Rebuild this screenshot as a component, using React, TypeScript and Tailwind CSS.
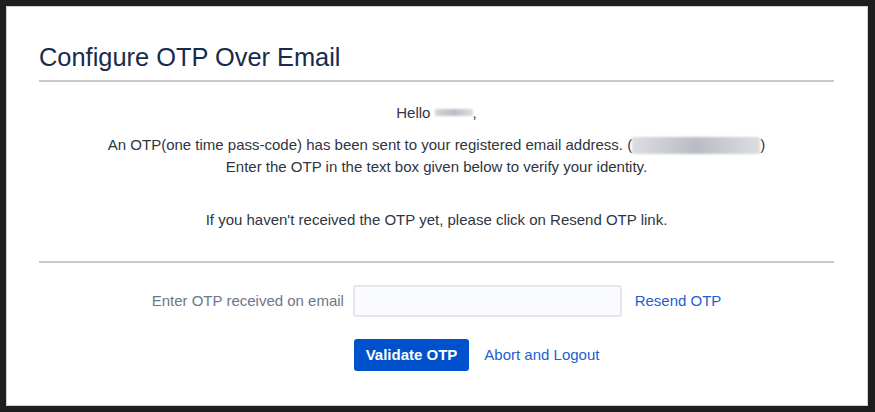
import React from "react";

const FONT = "font-['Liberation_Sans',Arial,sans-serif]";

// Blurred-out personal data placeholders (name, email)
function Redacted({ w, h, className = "" }: { w: string; h: string; className?: string }) {
  return (
    <span
      className={`inline-block align-middle bg-gradient-to-r from-[#d4d6db] via-[#b9bcc4] to-[#dcdee2] blur-[1px] ${w} ${h} ${className}`}
    />
  );
}

export default function App() {
  return (
    <div className={`h-[412px] w-[875px] bg-[#1e1e1e] pl-[6px] pt-[6px] ${FONT}`}>
      <div className="h-[400px] w-[862px] border border-[#cfcfcf] bg-white pl-[32px] pr-[33px] pt-[35px]">
        <h1 className="border-b-2 border-[#c9c9c9] pb-[8px] text-[25.4px] leading-[30px] font-normal text-[#172b4d]">
          Configure OTP Over Email
        </h1>

        <div className="text-center text-[15px] leading-[22px] text-[#2f3542]">
          <p className="mt-[20px]">
            Hello <Redacted w="w-[38px]" h="h-[7px]" className="-mt-[4px]" />,
          </p>
          <p className="mt-[10px]">
            An OTP(one time pass-code) has been sent to your registered email address. (
            <Redacted w="w-[128px]" h="h-[17px]" className="-mt-[2px] from-[#dcdee2] via-[#b4b8c0] to-[#d8dadf]" />)
          </p>
          <p>Enter the OTP in the text box given below to verify your identity.</p>
          <p className="mt-[31px]">If you haven't received the OTP yet, please click on Resend OTP link.</p>
        </div>

        <div className="mt-[30px] border-t-2 border-[#c9c9c9]" />

        <div className="mt-[22px] flex justify-center text-[15px]">
          <div className="grid grid-cols-[192px_auto] items-center gap-x-[9px] gap-y-[22px]">
            <label className="whitespace-nowrap text-right text-[#6b778c]">Enter OTP received on email</label>
            <div className="flex items-center gap-[13px]">
              <input
                type="text"
                className="h-[32px] w-[269px] rounded-[3px] border-2 border-[#e4e6ea] bg-[#fafbfc] px-2 outline-none"
              />
              <a href="#" className="whitespace-nowrap text-[#1d5fd0]">
                Resend OTP
              </a>
            </div>

            <div />
            <div className="flex items-center gap-[15px] pl-[1px]">
              <button className="h-[32px] whitespace-nowrap rounded-[3px] bg-[#0052cc] px-3 text-[15px] font-bold text-white">
                Validate OTP
              </button>
              <a href="#" className="whitespace-nowrap text-[#1d5fd0]">
                Abort and Logout
              </a>
            </div>
          </div>
        </div>
      </div>
    </div>
  );
}
